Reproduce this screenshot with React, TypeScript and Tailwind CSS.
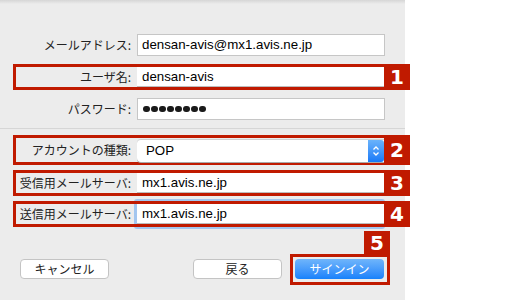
import React from "react";

const jp = "font-['Noto_Sans_CJK_JP',sans-serif]";
const lat = "font-['Liberation_Sans','Noto_Sans_CJK_JP',sans-serif]";

function Badge({ n, h }: { n: string; h: string }) {
  return (
    <div
      className={`w-[26px] ${h} shrink-0 bg-[#c01a00] text-white font-bold text-[20px] leading-none flex items-center justify-center font-['DejaVu_Sans',sans-serif]`}
    >
      {n}
    </div>
  );
}

function Label({ children }: { children: React.ReactNode }) {
  return (
    <div className={`w-[115px] shrink-0 text-right text-[12px] leading-none text-[#222] ${jp}`}>
      {children}
    </div>
  );
}

function PlainRow({ label, children }: { label: string; children: React.ReactNode }) {
  return (
    <div className="flex items-center h-[22px] pl-[16px]">
      <Label>{label}</Label>
      <div className="ml-[6px] w-[248px] h-[22px] bg-white border border-[#c6c6c6] flex items-center pl-[4px]">
        {children}
      </div>
    </div>
  );
}

function RedRow({
  label,
  n,
  h,
  children,
}: {
  label: string;
  n: string;
  h: string;
  children: React.ReactNode;
}) {
  return (
    <div className={`flex ml-[13px] ${h} relative z-10`}>
      <div className="w-[371px] h-full border-[3px] border-r-0 border-[#c01a00] flex items-center">
        <Label>{label}</Label>
        <div className="ml-[6px] w-[247px] h-full flex items-center">{children}</div>
      </div>
      <Badge n={n} h="h-full" />
    </div>
  );
}

function Field({ text }: { text: string }) {
  return (
    <div
      className={`w-full h-full bg-white border-b border-[#bdbdbd] flex items-center pl-[5px] text-[13.3px] text-black ${lat}`}
    >
      {text}
    </div>
  );
}

export default function App() {
  return (
    <div className="w-[530px] h-[300px] bg-white overflow-hidden">
      <div className="w-[405px] h-[300px] bg-[#ececec] flex flex-col">
        <div className="h-[4px] bg-linear-to-b from-[#d6d6d6] to-[#ececec]" />
        <div className="mt-[30px]">
          <PlainRow label="メールアドレス:">
            <span className={`text-[13.3px] text-black ${lat}`}>densan-avis@mx1.avis.ne.jp</span>
          </PlainRow>
        </div>
        <div className="mt-[8px]">
          <RedRow label="ユーザ名:" n="1" h="h-[26px]">
            <Field text="densan-avis" />
          </RedRow>
        </div>
        <div className="mt-[8px]">
          <PlainRow label="パスワード:">
            <div className="flex gap-[1.5px] pl-[1px]">
              {Array.from({ length: 8 }).map((_, i) => (
                <div key={i} className="w-[6.5px] h-[6.5px] rounded-full bg-[#1a1a1a]" />
              ))}
            </div>
          </PlainRow>
        </div>
        <div className="mt-[8px] h-[1px] bg-[#d6d6d6]" />
        <div className="mt-[6px]">
          <RedRow label="アカウントの種類:" n="2" h="h-[30px]">
            <div className="w-full h-[23px] mt-[1px] bg-white rounded-l-[4px] border-t border-[#d0d0d0] shadow-[0_1px_0_#a9a9a9] flex items-center">
              <span className={`flex-1 pl-[9px] text-[13.3px] text-black ${lat}`}>POP</span>
              <div className="w-[16px] h-full rounded-r-[3px] bg-linear-to-b from-[#6ab3fb] to-[#1679f7] flex items-center justify-center">
                <svg width="8" height="14" viewBox="0 0 8 14" fill="none">
                  <path d="M1.5 5.5 L4 3 L6.5 5.5" stroke="white" strokeWidth="1.3" />
                  <path d="M1.5 8.5 L4 11 L6.5 8.5" stroke="white" strokeWidth="1.3" />
                </svg>
              </div>
            </div>
          </RedRow>
        </div>
        <div className="mt-[5px]">
          <RedRow label="受信用メールサーバ:" n="3" h="h-[26px]">
            <Field text="mx1.avis.ne.jp" />
          </RedRow>
        </div>
        <div className="mt-[5px] relative">
          <div className="absolute left-[134px] top-[-2px] w-[251px] h-[30px] bg-[#a3c6ef] rounded-[3px] z-0" />
          <RedRow label="送信用メールサーバ:" n="4" h="h-[26px]">
            <Field text="mx1.avis.ne.jp" />
          </RedRow>
        </div>
        <div className="mt-[4px] flex items-end h-[54px]">
          <button
            className={`ml-[20px] mb-[6px] w-[89px] h-[20px] bg-white border border-[#c4c4c4] rounded-[4px] text-[12px] leading-none text-[#222] ${jp}`}
          >
            キャンセル
          </button>
          <button
            className={`ml-[84px] mb-[6px] w-[89px] h-[20px] bg-white border border-[#c4c4c4] rounded-[4px] text-[12px] leading-none text-[#222] ${jp}`}
          >
            戻る
          </button>
          <div className="ml-[8px] w-[100px] flex flex-col items-end">
            <Badge n="5" h="h-[23px]" />
            <div className="w-[100px] h-[31px] border-[3px] border-[#c01a00] flex items-start pl-[2px] pt-[2px]">
              <button
                className={`w-[89px] h-[20px] rounded-[4px] bg-linear-to-b from-[#6fb5fb] to-[#1581fb] text-white text-[12px] leading-none ${jp}`}
              >
                サインイン
              </button>
            </div>
          </div>
        </div>
      </div>
    </div>
  );
}
